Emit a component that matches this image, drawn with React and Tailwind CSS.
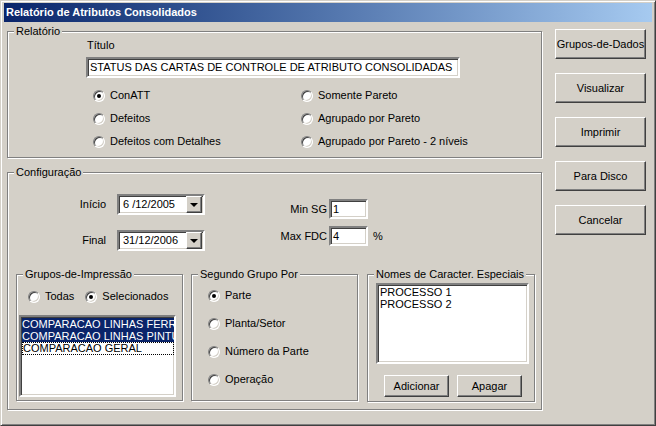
const raised = "bg-[#d4d0c8] border border-t-white border-l-white border-r-[#404040] border-b-[#404040] shadow-[inset_-1px_-1px_0_#808080]";
const sunken = "bg-white border-2 border-t-[#808080] border-l-[#808080] border-r-white border-b-white shadow-[inset_1px_1px_0_#404040,inset_-1px_-1px_0_#d4d0c8]";

function Group({ label, className, children }) {
  return (
    <div className={`relative border border-[#808080] shadow-[inset_1px_1px_0_#fff,1px_1px_0_#fff] ${className}`}>
      <span className="absolute -top-[7px] left-[6px] bg-[#d4d0c8] px-[2px] leading-[13px] whitespace-nowrap">{label}</span>
      {children}
    </div>
  );
}

function Radio({ checked, label, className = "" }) {
  return (
    <div className={`flex items-center h-[13px] ${className}`}>
      <span className={`w-3 h-3 rounded-full ${sunken} !border flex items-center justify-center`}>
        {checked && <span className="w-[4px] h-[4px] rounded-full bg-black" />}
      </span>
      <span className="ml-[5px] leading-[13px] whitespace-nowrap">{label}</span>
    </div>
  );
}

function Button({ children, className }) {
  return (
    <div className={`${raised} flex items-center justify-center ${className}`}>{children}</div>
  );
}

function Combo({ value }) {
  return (
    <div className={`${sunken} w-[88px] h-[21px] flex items-center justify-between pl-[4px] pr-[1px]`}>
      <span>{value}</span>
      <div className={`${raised} w-[16px] h-[17px] flex items-center justify-center`}>
        <span className="w-0 h-0 border-l-[4px] border-r-[4px] border-t-[4px] border-l-transparent border-r-transparent border-t-black" />
      </div>
    </div>
  );
}

export default function App() {
  return (
    <div className="w-[656px] h-[426px] bg-[#d4d0c8] border border-t-[#d4d0c8] border-l-[#d4d0c8] border-r-[#404040] border-b-[#404040] shadow-[inset_1px_1px_0_#fff,inset_-1px_-1px_0_#808080] text-[11px] text-black flex flex-col overflow-hidden" style={{ fontFamily: '"Liberation Sans", Arial, sans-serif' }}>
      <div className="mx-[3px] mt-[2px] h-[19px] bg-gradient-to-r from-[#0a246a] to-[#a6caf0] flex items-center pl-[2px]">
        <span className="text-white font-bold text-[11px]">Relatório de Atributos Consolidados</span>
      </div>
      <div className="flex pl-[6px] mt-[9px]">
        <div className="w-[535px] flex flex-col">
          <Group label="Relatório" className="h-[127px]">
            <div className="ml-[79px] mt-[7px] leading-[13px]">Título</div>
            <div className={`${sunken} ml-[78px] mt-[5px] w-[374px] h-[21px] flex items-center pl-[2px] whitespace-nowrap`}>STATUS DAS CARTAS DE CONTROLE DE ATRIBUTO CONSOLIDADAS</div>
            <div className="flex mt-[11px]">
              <div className="ml-[85px] w-[208px] flex flex-col gap-[10px]">
                <Radio checked label="ConATT" />
                <Radio label="Defeitos" />
                <Radio label="Defeitos com Detalhes" />
              </div>
              <div className="flex flex-col gap-[10px]">
                <Radio label="Somente Pareto" />
                <Radio label="Agrupado por Pareto" />
                <Radio label="Agrupado por Pareto - 2 níveis" />
              </div>
            </div>
          </Group>
          <Group label="Configuração" className="mt-[14px] h-[238px]">
            <div className="flex mt-[21px]">
              <div className="flex flex-col gap-[15px]">
                <div className="flex items-center">
                  <span className="w-[102px] text-right pr-[4px]">Início</span>
                  <span className="ml-[7px]"><Combo value="6 /12/2005" /></span>
                </div>
                <div className="flex items-center">
                  <span className="w-[102px] text-right pr-[4px]">Final</span>
                  <span className="ml-[7px]"><Combo value="31/12/2006" /></span>
                </div>
              </div>
              <div className="ml-[70px] mt-[5px] flex flex-col gap-[7px]">
                <div className="flex items-center">
                  <span className="w-[54px] text-right pr-[2px] whitespace-nowrap">Min SG</span>
                  <div className={`${sunken} w-[39px] h-[20px] pl-[2px] flex items-center`}>1</div>
                </div>
                <div className="flex items-center">
                  <span className="w-[54px] text-right pr-[2px] whitespace-nowrap">Max FDC</span>
                  <div className={`${sunken} w-[39px] h-[20px] pl-[2px] flex items-center`}>4</div>
                  <span className="ml-[5px]">%</span>
                </div>
              </div>
            </div>
            <div className="flex ml-[8px] mt-[23px]">
              <Group label="Grupos-de-Impressão" className="w-[167px] h-[127px]">
                <div className="flex mt-[15px] ml-[11px]">
                  <Radio label="Todas" />
                  <Radio checked label="Selecionados" className="ml-[11px]" />
                </div>
                <div className={`${sunken} ml-[2px] mt-[12px] w-[157px] h-[82px] overflow-hidden pt-[1px] pl-[1px]`}>
                  <div className="bg-[#0a246a] text-white leading-[12px] whitespace-nowrap">COMPARACAO LINHAS FERRAMENTARIA</div>
                  <div className="bg-[#0a246a] text-white leading-[12px] whitespace-nowrap">COMPARACAO LINHAS PINTURA</div>
                  <div className="leading-[11px] whitespace-nowrap border border-dotted border-black">COMPARACAO GERAL</div>
                </div>
              </Group>
              <Group label="Segundo Grupo Por" className="ml-[8px] w-[167px] h-[127px]">
                <div className="flex flex-col gap-[15px] mt-[14px] ml-[16px]">
                  <Radio checked label="Parte" />
                  <Radio label="Planta/Setor" />
                  <Radio label="Número da Parte" />
                  <Radio label="Operação" />
                </div>
              </Group>
              <Group label="Nomes de Caracter. Especiais" className="ml-[9px] w-[168px] h-[128px]">
                <div className={`${sunken} ml-[8px] mt-[8px] w-[153px] h-[81px] pl-[2px] pt-[1px] leading-[12px]`}>
                  <div>PROCESSO 1</div>
                  <div>PROCESSO 2</div>
                </div>
                <div className="flex ml-[16px] mt-[11px] gap-[8px]">
                  <Button className="w-[65px] h-[22px]">Adicionar</Button>
                  <Button className="w-[65px] h-[22px]">Apagar</Button>
                </div>
              </Group>
            </div>
          </Group>
        </div>
        <div className="ml-[13px] -mt-[2px] flex flex-col gap-[14px]">
          <Button className="w-[91px] h-[30px]">Grupos-de-Dados</Button>
          <Button className="w-[91px] h-[30px]">Visualizar</Button>
          <Button className="w-[91px] h-[30px]">Imprimir</Button>
          <Button className="w-[91px] h-[30px]">Para Disco</Button>
          <Button className="w-[91px] h-[30px]">Cancelar</Button>
        </div>
      </div>
    </div>
  );
}
